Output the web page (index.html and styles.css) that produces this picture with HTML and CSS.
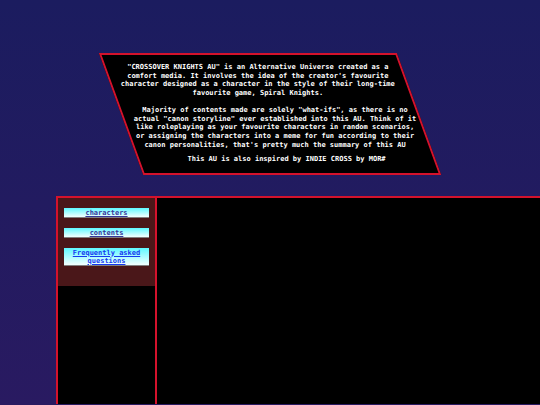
FILE: index.html
```html
<!DOCTYPE html>
<html lang="en">
<head>
  <meta charset="UTF-8" />
  <meta name="viewport" content="width=device-width, initial-scale=1.0" />
  <title>Crossover Knights AU</title>
  <link rel="stylesheet" href="styles.css">
</head>
<body>
  <div class="intro">
    <p class="p1">"CROSSOVER KNIGHTS AU" is an Alternative Universe created as a comfort media. It involves the idea of the creator's favourite character designed as a character in the style of their long-time favourite game, Spiral Knights.</p>
    <p class="p2">Majority of contents made are solely "what-ifs", as there is no actual "canon storyline" ever established into this AU. Think of it like roleplaying as your favourite characters in random scenarios, or assigning the characters into a meme for fun according to their canon personalities, that's pretty much the summary of this AU</p>
    <p class="p3">This AU is also inspired by INDIE CROSS by MOR#</p>
  </div>

  <div class="panel">
    <div class="side">
      <div class="nav">
        <a class="btn visited" href="#characters">characters</a>
        <a class="btn visited" href="#contents">contents</a>
        <a class="btn" href="#faq">Frequently asked questions</a>
      </div>
    </div>
    <div class="main"></div>
  </div>
</body>
</html>
```

FILE: styles.css
```css
html, body {
  margin: 0;
  height: 100%;
  overflow: hidden;
}
body {
  background: linear-gradient(#1b1c5f, #291a61);
  font-family: "DejaVu Sans Mono", "Liberation Mono", monospace;
  font-weight: bold;
  font-size: 7px;
  line-height: 8.7px;
}
.intro {
  width: 294px;
  margin: 53px auto 0;
  padding: 8px 0 9px;
  background: #000;
  border: 2px solid #d4122c;
  transform: skewX(20deg);
  color: #fff;
}
.intro p {
  width: 288px;
  margin: 0 auto;
  text-align: center;
  transform: skewX(-20deg);
}
.intro .p1 {
  margin-bottom: 8.2px;
}
.intro .p2 {
  margin-bottom: 5.5px;
}
.panel {
  display: flex;
  margin: 21.5px -20px 0 56px;
  height: 206px;
  background: #000;
  border: 2px solid #d4122c;
  border-bottom: 0;
}
.side {
  width: 97px;
  border-right: 2px solid #d4122c;
}
.nav {
  display: flex;
  flex-direction: column;
  gap: 10.5px;
  padding: 10px 6px 20px;
  background: #4a1719;
}
.btn {
  display: block;
  text-align: center;
  line-height: 8px;
  padding-top: 0.5px;
  background: linear-gradient(#5ff8ff, #f4ffff);
  border-bottom: 1px solid #808080;
  color: #1538f0;
  text-decoration: underline;
}
.btn.visited {
  color: #35369a;
}
.main {
  flex: 1;
}
```
